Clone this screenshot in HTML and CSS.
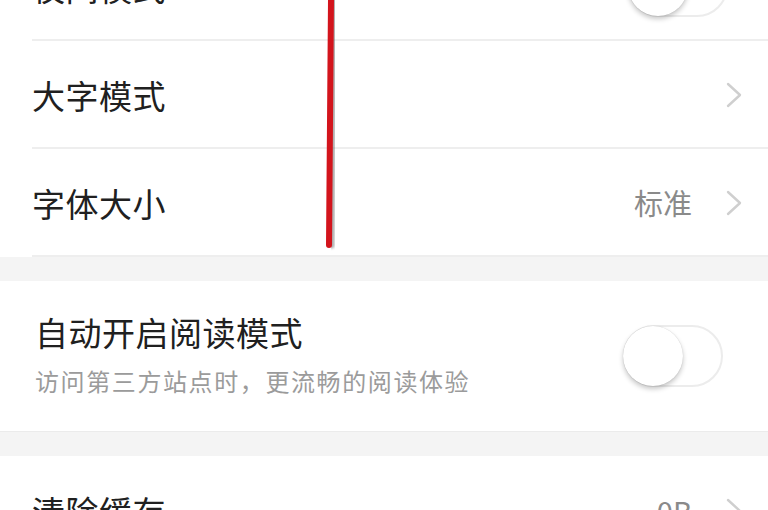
FILE: index.html
```html
<!DOCTYPE html>
<html lang="zh-CN">
<head>
<meta charset="utf-8">
<title>设置</title>
<link rel="stylesheet" href="styles.css">
</head>
<body>
<div class="page">
  <section class="group first">
    <div class="row">
      <span class="label">夜间模式</span>
      <span class="switch"><span class="knob"></span></span>
    </div>
    <div class="row">
      <span class="label">大字模式</span>
      <span class="chev"><svg viewBox="0 0 16 26" width="16" height="26"><path d="M2 2 L14 13 L2 24" fill="none" stroke="#cfcfcf" stroke-width="2.4" stroke-linecap="round" stroke-linejoin="round"/></svg></span>
    </div>
    <div class="row">
      <span class="label">字体大小</span>
      <span class="value">标准</span>
      <span class="chev"><svg viewBox="0 0 16 26" width="16" height="26"><path d="M2 2 L14 13 L2 24" fill="none" stroke="#cfcfcf" stroke-width="2.4" stroke-linecap="round" stroke-linejoin="round"/></svg></span>
    </div>
  </section>

  <section class="group">
    <div class="row tall">
      <div class="texts">
        <span class="label">自动开启阅读模式</span>
        <span class="sub">访问第三方站点时，更流畅的阅读体验</span>
      </div>
      <span class="switch big"><span class="knob"></span></span>
    </div>
  </section>

  <section class="group">
    <div class="row">
      <span class="label">清除缓存</span>
      <span class="value">0B</span>
      <span class="chev"><svg viewBox="0 0 16 26" width="16" height="26"><path d="M2 2 L14 13 L2 24" fill="none" stroke="#cfcfcf" stroke-width="2.4" stroke-linecap="round" stroke-linejoin="round"/></svg></span>
    </div>
  </section>

  <svg class="mark" viewBox="0 0 24 252" width="24" height="252">
    <defs>
      <filter id="blur" x="-50%" y="-5%" width="200%" height="110%"><feGaussianBlur stdDeviation="1.2"/></filter>
    </defs>
    <path d="M14 0 L12 246" stroke="#6c6c6c" stroke-opacity="0.55" stroke-width="5" stroke-linecap="round" filter="url(#blur)"/>
    <path d="M11 0 L9 245" stroke="#d3141c" stroke-width="6" stroke-linecap="round"/>
  </svg>
</div>
</body>
</html>
```

FILE: styles.css
```css
* { box-sizing: border-box; }

html, body {
  margin: 0;
  padding: 0;
  width: 768px;
  height: 510px;
  overflow: hidden;
  background: #f4f4f4;
  font-family: "Noto Sans CJK SC", "Noto Sans", sans-serif;
}

.page {
  position: relative;
  margin-top: -67px;
  display: flex;
  flex-direction: column;
  gap: 24px;
}

.group {
  background: #ffffff;
  display: flex;
  flex-direction: column;
  border-bottom: 1px solid #ebebeb;
}

.group.first {
  border-bottom: none;
}

.row {
  display: flex;
  align-items: center;
  height: 108px;
  margin-left: 32px;
  padding-right: 26px;
  border-bottom: 2px solid #eeeeee;
}

.row:last-child {
  border-bottom: none;
}

.group.first .row:last-child {
  border-bottom: 2px solid #eeeeee;
}

.label {
  flex: 1;
  font-size: 33px;
  line-height: 40px;
  color: #202020;
  padding-top: 1px;
  letter-spacing: 0.5px;
}

.value {
  font-size: 29px;
  color: #8a8a8a;
  padding-top: 0;
  margin-right: 34px;
}

.chev {
  display: flex;
  align-items: center;
  padding-top: 2px;
}

.switch {
  display: flex;
  align-items: center;
  width: 100px;
  height: 62px;
  border-radius: 31px;
  border: 2px solid #ececec;
  background: #ffffff;
  margin-right: 14px;
}

.knob {
  width: 60px;
  height: 60px;
  margin-left: -2px;
  border-radius: 50%;
  background: #ffffff;
  box-shadow: 0 3px 5px rgba(0, 0, 0, 0.22), 0 0 1px rgba(0, 0, 0, 0.2);
}

.row.tall {
  height: 150px;
  margin-left: 35px;
  padding-right: 45px;
}

.texts {
  flex: 1;
  display: flex;
  flex-direction: column;
}

.texts .label {
  padding-top: 0;
  margin-top: -4px;
}

.sub {
  font-size: 24px;
  line-height: 30px;
  color: #9b9b9b;
  margin-top: 14px;
  letter-spacing: 1.6px;
}

.switch.big {
  margin-right: 0;
  margin-top: 0;
}

.mark {
  position: absolute;
  left: 320px;
  top: 67px;
}
```
